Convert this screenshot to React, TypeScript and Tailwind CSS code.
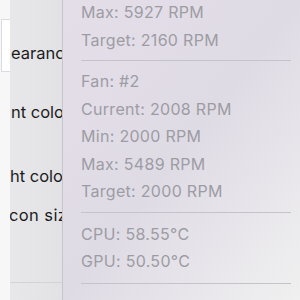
import React from "react";

const Row = ({ children }: { children: React.ReactNode }) => (
  <div className="h-[27.5px] leading-[27.5px] whitespace-nowrap">{children}</div>
);

const Sep = ({ className = "" }: { className?: string }) => (
  <div className={"h-px bg-[#c4c3c9] " + className} />
);

export default function App() {
  return (
    <div
      className="w-[300px] h-[300px] flex overflow-hidden"
      style={{ fontFamily: "Inter, 'Noto Sans', sans-serif" }}
    >
      <div className="w-[10px] shrink-0 bg-[#f7f7f8] flex flex-col">
        <div className="mt-[19px] h-[53px] ml-px bg-white border-l border-t border-b border-[#d9dce4]" />
      </div>
      <div className="w-[52px] shrink-0 bg-gradient-to-r from-[#e8e8ea] to-[#e2e2e4] flex flex-col overflow-hidden text-[16.5px] text-[#1c1c1e] whitespace-nowrap">
        <div className="h-[42px]" />
        <div className="h-[22px] leading-[22px] pl-px">earance</div>
        <div className="h-[37px]" />
        <div className="h-[22px] leading-[22px] pl-px">nt colo</div>
        <div className="h-[42px]" />
        <div className="h-[22px] leading-[22px]">ht colo</div>
        <div className="h-[17px]" />
        <div className="h-[22px] leading-[22px] -ml-[1px] tracking-[0.4px]">con size</div>
        <div className="h-[56px]" />
        <div className="h-px bg-[#d3d3d6]" />
      </div>
      <div className="flex-1 border-l border-[#c6c6ca] bg-gradient-to-br from-[#e4dee9] via-[#dfdbe5] to-[#f0f0f0] overflow-hidden">
        <div className="-mt-[1px] pl-[18px] pr-[9px] text-[16px] tracking-[0.3px] text-[#9d9ca3]">
          <Row>Max: 5927 RPM</Row>
          <Row>Target: 2160 RPM</Row>
          <Sep className="mt-[6px] mb-[7px]" />
          <Row>Fan: #2</Row>
          <Row>Current: 2008 RPM</Row>
          <Row>Min: 2000 RPM</Row>
          <Row>Max: 5489 RPM</Row>
          <Row>Target: 2000 RPM</Row>
          <Sep className="mt-[6px] mb-[8px]" />
          <Row>CPU: 58.55°C</Row>
          <Row>GPU: 50.50°C</Row>
          <Sep className="mt-[7px]" />
        </div>
      </div>
    </div>
  );
}
